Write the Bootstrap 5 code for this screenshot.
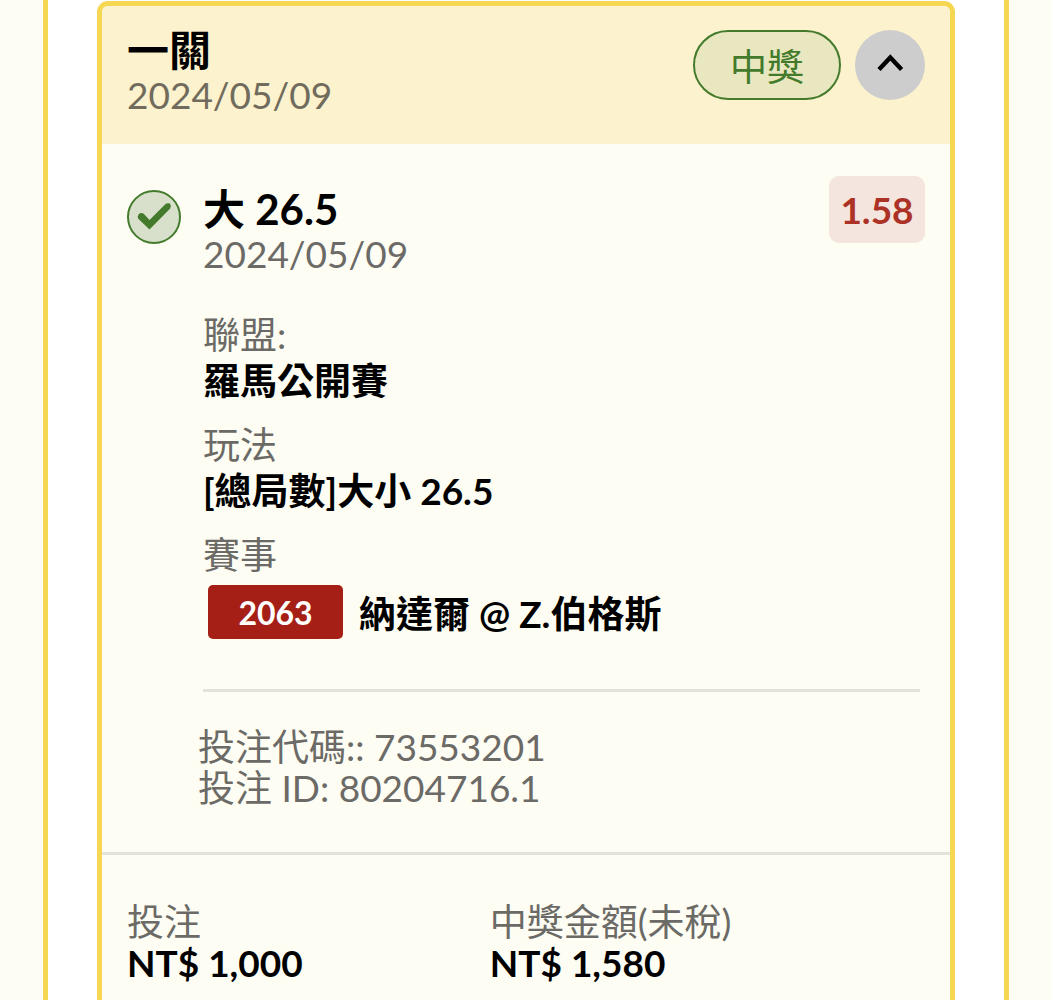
<!DOCTYPE html>
<html lang="zh-Hant">
<head>
<meta charset="utf-8">
<meta name="viewport" content="width=device-width, initial-scale=1">
<title>投注紀錄</title>
<link href="https://cdn.jsdelivr.net/npm/bootstrap@5.3.0/dist/css/bootstrap.min.css" rel="stylesheet">
<style>
  body { background: #fdfdf3; color: #000; font-family: Lato, "Noto Sans CJK TC", sans-serif; font-size: 37px; line-height: 41px; }
  .ticket-frame { margin: 0 43px; padding: 1px 49px 0; background: #fff; border: solid #f6d751; border-width: 0 5px; }
  .ticket { background: #fdfdf3; border: 5px solid #f6d751; border-bottom: 0; border-radius: 11px 11px 0 0; overflow: hidden; }
  .ticket-top { background: #fcf2cd; padding: 22px 25px 27px; }
  .ticket-title { font-size: 42px; line-height: 44px; font-weight: 700; margin: 0; }
  .date-line { color: #6b6a66; line-height: 45px; margin: 0; }
  .ticket-top .date-line { color: #706b5c; }
  .top-tools { gap: 14px; padding-top: 2px; }
  .win-pill { width: 148px; height: 70px; padding-top: 2px; border: 2px solid #437a2b; border-radius: 35px; background: #e8e7bf; color: #437a2b; }
  .fold-btn { width: 70px; height: 70px; border-radius: 50%; background: #cdcdcd; border: 0; padding: 0; }
  .ticket-bet { padding: 32px 25px 44px; }
  .state-icon { width: 54px; height: 54px; margin: 14px 22px 0 0; }
  .bet-heading { padding-top: 11px; }
  .odds-tag { width: 96px; height: 67px; border-radius: 10px; background: #f4e5df; color: #ac3226; font-weight: 700; }
  .bet-facts { margin: 36px 0 0; }
  .bet-facts dt, .sum-label { color: #6b6a66; font-weight: 400; line-height: 46px; }
  .bet-facts dd { font-weight: 700; line-height: 46px; margin: 0 0 18px; }
  .bet-facts .match-row { line-height: 54px; margin: 5px 0 0 5px; gap: 16px; }
  .match-no { width: 135px; height: 54px; border-radius: 5px; background: #a51f17; color: #fff; font-size: 32px; padding-top: 2px; }
  .match-teams { padding-top: 4px; }
  .bet-rule { border: 0; border-top: 3px solid #e3e3dc; opacity: 1; margin: 48px 5px 34px 0; }
  .bet-ids { color: #6b6a66; margin: 0 0 0 -5px; }
  .ticket-sum { border-top: 3px solid #e3e3dc; padding: 46px 25px 18px; }
  .sum-grid { grid-template-columns: 5fr 6fr; margin: 0; }
  .sum-label { line-height: 41px; }
  .sum-value { font-weight: 700; margin: 0; }
</style>
</head>
<body>
<main class="ticket-frame min-vh-100 d-flex flex-column">
  <article class="ticket flex-fill d-flex flex-column">
    <header class="ticket-top d-flex justify-content-between align-items-start">
      <div>
        <h1 class="ticket-title">一關</h1>
        <p class="date-line">2024/05/09</p>
      </div>
      <div class="top-tools d-flex">
        <span class="win-pill d-flex align-items-center justify-content-center">中獎</span>
        <button type="button" class="fold-btn d-flex align-items-center justify-content-center" aria-label="收合">
          <svg width="70" height="70" viewBox="0 0 70 70" fill="none" stroke="#000" stroke-width="4.4" aria-hidden="true"><path d="M24 39.500 35.300 27.500 46.600 39.500"/></svg>
        </button>
      </div>
    </header>
    <section class="ticket-bet d-flex">
      <svg class="state-icon flex-shrink-0" viewBox="0 0 54 54" fill="none" aria-label="中獎" role="img">
        <circle cx="27" cy="27" r="26" fill="#d8e0cc" stroke="#437a2b" stroke-width="2"/>
        <path d="M11.500 29 Q10 26.500 11.500 24.500 Q14 22 17 24 L22.500 30 38 14.500 Q40 12.500 43 13.500 Q44.500 15.500 43.200 18.500 L22.500 39.500Z" fill="#437a2b"/>
      </svg>
      <div class="flex-fill">
        <div class="d-flex justify-content-between align-items-start">
          <div class="bet-heading">
            <h2 class="ticket-title">大 26.5</h2>
            <p class="date-line">2024/05/09</p>
          </div>
          <span class="odds-tag d-flex align-items-center justify-content-center">1.58</span>
        </div>
        <dl class="bet-facts">
          <dt>聯盟:</dt>
          <dd>羅馬公開賽</dd>
          <dt>玩法</dt>
          <dd>[總局數]大小 26.5</dd>
          <dt>賽事</dt>
          <dd class="match-row d-flex align-items-center"><span class="match-no d-flex align-items-center justify-content-center">2063</span><span class="match-teams">納達爾 @ Z.伯格斯</span></dd>
        </dl>
        <hr class="bet-rule">
        <div class="bet-ids">
          <div>投注代碼:: 73553201</div>
          <div>投注 ID: 80204716.1</div>
        </div>
      </div>
    </section>
    <footer class="ticket-sum">
      <dl class="sum-grid d-grid">
        <div>
          <dt class="sum-label">投注</dt>
          <dd class="sum-value">NT$ 1,000</dd>
        </div>
        <div>
          <dt class="sum-label">中獎金額(未稅)</dt>
          <dd class="sum-value">NT$ 1,580</dd>
        </div>
      </dl>
    </footer>
  </article>
</main>
<script src="https://cdn.jsdelivr.net/npm/bootstrap@5.3.0/dist/js/bootstrap.bundle.min.js"></script>
</body>
</html>
